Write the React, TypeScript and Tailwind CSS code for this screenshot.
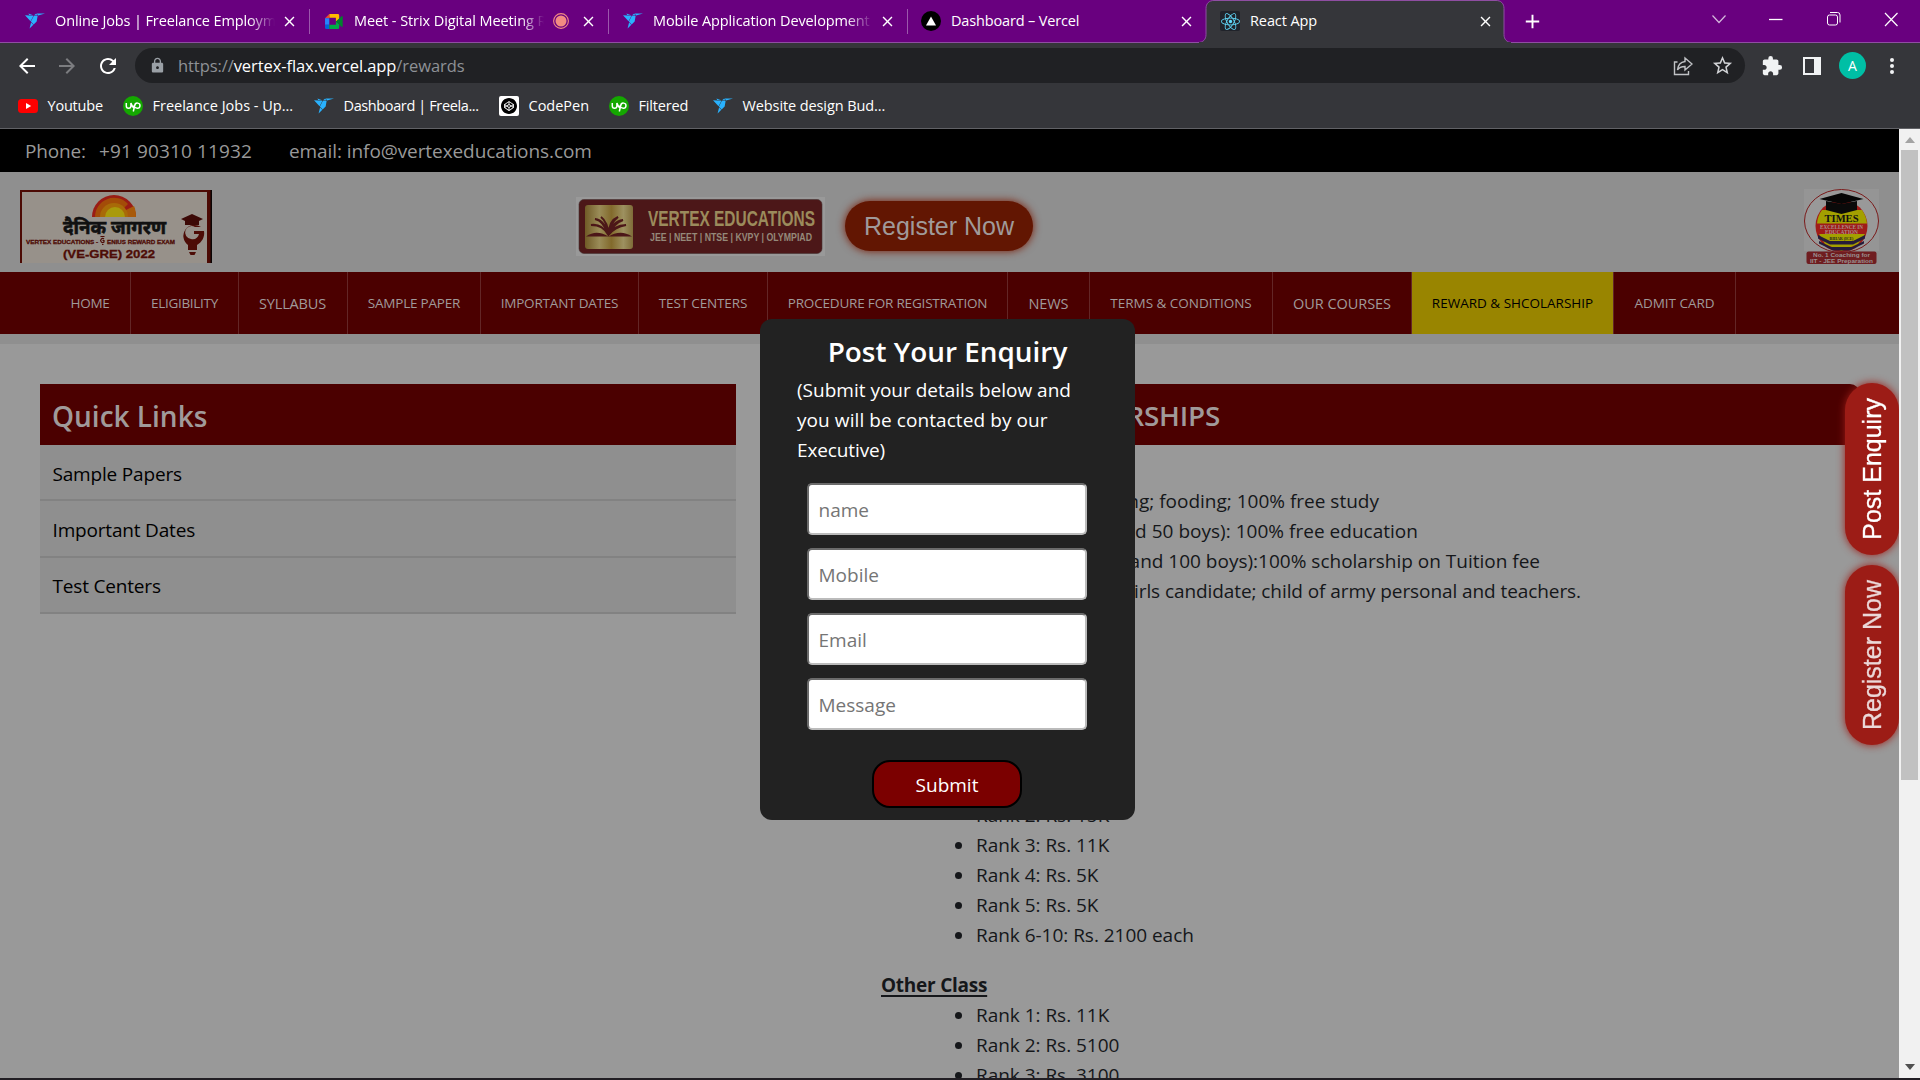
import React from "react";
import { SiFreelancer, SiCodepen } from "react-icons/si";
import { FaReact } from "react-icons/fa";
import { MdArrowBack, MdArrowForward, MdRefresh, MdLock, MdStarBorder, MdExtension, MdClose, MdAdd } from "react-icons/md";

const ui = "font-['Open_Sans','Noto_Sans',sans-serif]";
const arial = "font-['Liberation_Sans',Arial,sans-serif]";

function Bird() {
  return <SiFreelancer className="h-[20px] w-[20px] text-[#29b2fe]" />;
}

function Up() {
  return (
    <svg viewBox="0 0 20 20" className="h-5 w-5">
      <circle cx="10" cy="10" r="10" fill="#14a800" />
      <path
        d="M3.3 7v3a2.3 2.3 0 0 0 4.6 0V7c1 3 2.1 4.6 3.4 5.4M10.3 15.5l1.5-6.2A2.6 2.6 0 1 1 14.2 12.300c-1.500 0-3-1.200-3.900-2.600"
        fill="none"
        stroke="#fff"
        strokeWidth="1.500"
      />
    </svg>
  );
}

function Youtube() {
  return (
    <svg viewBox="0 0 20 20" className="h-5 w-5">
      <rect x="0" y="3" width="20" height="14" rx="3.500" fill="#f00" />
      <path d="M8 7l5.200 3L8 13z" fill="#fff" />
    </svg>
  );
}

function Meet() {
  return (
    <svg viewBox="0 0 20 18" className="h-[17px] w-5">
      <path d="M5 1h9a1.500 1.500 0 0 1 1.500 1.500V7l-3.500 2V5H5z" fill="#ffba00" />
      <path d="M5 1v4.500H.5z" fill="#ea4335" />
      <path d="M.5 5.500H5v7H.5z" fill="#2684fc" />
      <path d="M.5 12.500H5V17H2a1.500 1.500 0 0 1-1.500-1.500z" fill="#0066da" />
      <path d="M5 12.500h7V9l3.500 3v3.500A1.500 1.500 0 0 1 14 17H5z" fill="#00ac47" />
      <path d="M12 9l6-5.500c.6-.5 1.200-.2 1.200.5v10c0 .7-.6 1-1.200.5z" fill="#00832d" />
    </svg>
  );
}

function Vercel() {
  return (
    <svg viewBox="0 0 20 20" className="h-5 w-5">
      <circle cx="10" cy="10" r="10" fill="#000" />
      <path d="M10 5.500l5 9H5z" fill="#fff" />
    </svg>
  );
}

function Tab({ icon, title, recording }: { icon: React.ReactNode; title: string; recording?: boolean }) {
  return (
    <div className="flex h-[42px] w-[299px] shrink-0 items-center pl-[14px]">
      <div className="flex w-[20px] shrink-0 justify-center">{icon}</div>
      <div
        className={
          "ml-[10px] overflow-hidden whitespace-nowrap text-[14.500px] leading-[20px] text-white [mask-image:linear-gradient(to_right,black_88%,transparent)] " +
          (recording ? "w-[190px] tracking-[-0.080px]" : "w-[220px] tracking-[-0.120px]")
        }
      >
        {title}
      </div>
      {recording && (
        <svg viewBox="0 0 16 16" className="ml-[9px] h-4 w-4 shrink-0">
          <circle cx="8" cy="8" r="5.500" fill="#f28b82" />
          <circle cx="8" cy="8" r="7.400" fill="none" stroke="#f28b82" strokeWidth="1.100" />
        </svg>
      )}
      <MdClose className="ml-auto mr-[11px] h-[17px] w-[17px] shrink-0 text-white" />
      <div className="h-[25px] w-px bg-[#9c58ac]" />
    </div>
  );
}

function TabStrip() {
  return (
    <div className="flex h-[43px] border-b border-[#8f4ea2] bg-[#69007f]">
      <div className="flex w-[1206px] pl-[11px]">
        <Tab icon={<Bird />} title="Online Jobs | Freelance Employment" />
        <Tab icon={<Meet />} title="Meet - Strix Digital Meeting Room" recording />
        <Tab icon={<Bird />} title="Mobile Application Development" />
        <div className="flex h-[42px] w-[298px] shrink-0 items-center pl-[13px]">
          <Vercel />
          <div className="ml-[10px] whitespace-nowrap text-[14.500px] tracking-[-0.150px] text-white">Dashboard – Vercel</div>
          <MdClose className="ml-auto mr-[11px] h-[17px] w-[17px] text-white" />
        </div>
      </div>
      <div className="relative h-[43px] w-[298px]">
        <svg viewBox="0 0 314 43" className="absolute -left-[8px] top-0 h-[43px] w-[314px]">
          <path
            d="M0 43v-.5c5 0 8-3 8-8V8.500C8 3.500 11 .5 16 .5H298c5 0 8 3 8 8V34.500c0 5 3 8 8 8V43z"
            fill="#35363a"
            stroke="#8f4ea2"
          />
          <rect y="42" x="1" width="312" height="1" fill="#35363a" />
        </svg>
        <div className="relative flex h-[42px] items-center pl-[14px]">
          <div className="flex h-5 w-5 items-center justify-center rounded-[2px] bg-[#20232a]">
            <FaReact className="h-[19px] w-[19px] text-[#61dafb]" />
          </div>
          <div className="ml-[10px] text-[14.500px] tracking-[-0.100px] text-white">React App</div>
          <MdClose className="ml-auto mr-[10px] h-[17px] w-[17px] text-white" />
        </div>
      </div>
      <div className="flex h-[42px] w-[416px] items-center pl-[17px] text-white">
        <MdAdd className="h-[23px] w-[23px]" />
        <svg viewBox="0 0 190 20" className="mb-[5px] ml-[164px] h-5 w-[190px]" fill="none" stroke="#fff">
          <path d="M4.500 6.500l6.500 7 6.500-7" stroke="#d5b8dc" strokeWidth="1.200" />
          <path d="M61 10.500h13.500" strokeWidth="1.300" />
          <rect x="119.500" y="6" width="10" height="10" rx="2" />
          <path d="M122 3.500h7.500a2.500 2.500 0 0 1 2.500 2.500v7.500" />
          <path d="M177 4l12.500 13M189.500 4l-12.500 13" strokeWidth="1.200" />
        </svg>
      </div>
    </div>
  );
}

function Toolbar() {
  return (
    <div className="flex h-[45px] items-center bg-[#35363a] text-white">
      <div className="flex w-[135px] items-center pl-[15px]">
        <MdArrowBack className="h-6 w-6" />
        <MdArrowForward className="ml-[16px] h-6 w-6 text-[#7c7d80]" />
        <MdRefresh className="ml-[17px] h-6 w-6" />
      </div>
      <div className="flex h-[35px] w-[1610px] items-center rounded-full bg-[#202124] pl-[14px] pr-[11px]">
        <MdLock className="h-[17px] w-[17px] text-[#9aa0a6]" />
        <div className="ml-[12px] pt-px text-[16.500px] leading-[22px] tracking-[-0.080px] text-[#8e9196]">
          https://<span className="text-white">vertex-flax.vercel.app</span>/rewards
        </div>
        <svg viewBox="0 0 20 20" className="ml-auto h-5 w-5" fill="none" stroke="#c0c2c5" strokeWidth="1.400">
          <path d="M4.500 6H1.500v12.500h14V15" />
          <path d="M12 2l7 6-7 6v-3.500c-4 0-6 1-7.500 3.500C5 9 7.500 6 12 5.500z" />
        </svg>
        <MdStarBorder className="ml-[18px] h-[23px] w-[23px] text-[#d0d2d5]" />
      </div>
      <MdExtension className="ml-[16px] h-[22px] w-[22px] text-[#f1f3f4]" />
      <div className="ml-[20px] h-[18px] w-[18px] border-[2.500px] border-r-[7px] border-[#f1f3f4]" />
      <div className="ml-[18px] flex h-[27px] w-[27px] items-center justify-center rounded-full bg-[#00bfa5] text-[14px]">A</div>
      <svg viewBox="0 0 6 20" className="ml-[23px] h-5 w-[6px]" fill="#f1f3f4">
        <circle cx="3" cy="4" r="2" />
        <circle cx="3" cy="10" r="2" />
        <circle cx="3" cy="16" r="2" />
      </svg>
    </div>
  );
}

function Bookmark({ icon, label, className }: { icon: React.ReactNode; label: string; className: string }) {
  return (
    <div className={"flex shrink-0 items-center whitespace-nowrap " + className}>
      <div className="flex w-5 justify-center">{icon}</div>
      <span className="ml-[9.500px] text-[14.500px] text-white">{label}</span>
    </div>
  );
}

function Bookmarks() {
  return (
    <div className="flex h-[41px] items-center border-b border-[#616266] bg-[#35363a] pb-[4px] pl-[18px]">
      <Bookmark className="w-[105px] tracking-[-0.200px]" icon={<Youtube />} label="Youtube" />
      <Bookmark className="w-[191px] tracking-[0px]" icon={<Up />} label="Freelance Jobs - Up..." />
      <Bookmark className="w-[185px] tracking-[-0.380px]" icon={<Bird />} label="Dashboard | Freela..." />
      <Bookmark
        className="w-[110px]"
        icon={
          <div className="flex h-5 w-5 items-center justify-center rounded-[2px] bg-white">
            <SiCodepen className="h-4 w-4 text-black" />
          </div>
        }
        label="CodePen"
      />
      <Bookmark className="w-[104px] tracking-[-0.180px]" icon={<Up />} label="Filtered" />
      <Bookmark className="w-[180px] tracking-[-0.100px]" icon={<Bird />} label="Website design Bud..." />
    </div>
  );
}

function JagranLogo() {
  return (
    <svg viewBox="0 0 192 73" className="h-[73px] w-[192px]">
      <rect width="192" height="73" fill="#4c0a04" />
      <rect x="190.500" width="1.500" height="73" fill="#0a0505" />
      <rect x="2" y="2" width="185" height="71" fill="#97918a" />
      <path d="M72 27a22 22 0 0 1 44 0z" fill="#9a1c14" />
      <path d="M75 27a19 19 0 0 1 33-13l-6 6a12 12 0 0 1 2 7z" fill="#a34c08" />
      <path d="M104 21l10-5c1.500 3 2 7 2 11h-10z" fill="#a85a0a" />
      <path d="M80 27a14 14 0 0 1 28 0z" fill="#a86a08" />
      <path d="M85 27a10 10 0 0 1 20 0z" fill="#a99a0c" />
      <text x="43" y="44" fontSize="19.500" fontWeight="700" fill="#111" stroke="#111" strokeWidth="0.600" textLength="103" lengthAdjust="spacingAndGlyphs">
        दैनिक जागरण
      </text>
      <g fontFamily="Liberation Sans" fontWeight="700" fill="#4d0c06" stroke="#4d0c06" strokeWidth="0.300">
        <text x="6" y="54" fontSize="6" textLength="72" lengthAdjust="spacingAndGlyphs">VERTEX EDUCATIONS -</text>
        <text x="87" y="54" fontSize="6" textLength="68" lengthAdjust="spacingAndGlyphs">ENIUS REWARD EXAM</text>
        <text x="43" y="67.500" fontSize="11" textLength="92" lengthAdjust="spacingAndGlyphs">(VE-GRE) 2022</text>
      </g>
      <path d="M80.500 46.500h4M84 49a2 2 0 1 0 0 3v-1.500h-1.500M82 54.500h1.500" fill="none" stroke="#4d0c06" strokeWidth="1.200" />
      <path d="M172 24l11 5-4 2v4h-14v-4l-4-2z" fill="#3c0906" />
      <path d="M181 37a11 11 0 1 0-13 18v5h9v-5c5-3 8-8 7-14h-10v3h5c-1 4-4 6-8 5a6.500 6.500 0 1 1 4-12z" fill="#4d0c06" />
      <path d="M169 62h7l-1.500 3h-4z" fill="#4d0c06" />
    </svg>
  );
}

function VertexLogo() {
  return (
    <svg viewBox="0 0 249 59" className="h-[59px] w-[249px]">
      <defs>
        <linearGradient id="gold" x1="0" x2="1">
          <stop offset="0" stopColor="#705a26" />
          <stop offset="0.300" stopColor="#9a8c58" />
          <stop offset="0.550" stopColor="#826a2c" />
          <stop offset="0.800" stopColor="#9d9160" />
          <stop offset="1" stopColor="#7f6c38" />
        </linearGradient>
      </defs>
      <rect width="249" height="59" fill="#999" />
      <rect x="3" y="2.500" width="243" height="54" rx="5" fill="#4c1718" stroke="#433" strokeWidth="0.600" />
      <rect x="9" y="8" width="48" height="44" rx="3" fill="url(#gold)" />
      <g transform="translate(0 -3)">
        <path d="M10 42.500c8-6 16-4 22.500 0 6.500-4 15-6 23.500 0H10z" fill="#4c1718" />
        <path
          d="M32.500 41C28 33 22 30 15 31c8 0 14 3 17.500 10C29 31 25 26 19 25c7 1 11 6 13.500 16C31 29 28 25 25 23c4 3 7 9 7.500 18C33 29 37 25 42 23c-4 3-8 9-9.500 18C36 31 40 27 47 26c-6 2-11 7-14.500 15C37 33 43 31 50 31c-7 1-13 4-17.500 10z"
          fill="#4c1718"
          stroke="#4c1718"
          strokeWidth="2"
        />
      </g>
      <g fontFamily="Liberation Sans" fill="#9b8b5c">
        <text x="72" y="29" fontSize="22" fontWeight="700" textLength="167" lengthAdjust="spacingAndGlyphs">VERTEX EDUCATIONS</text>
        <text x="74" y="43.700" fontSize="10.800" fontWeight="700" fill="#95897a" textLength="162" lengthAdjust="spacingAndGlyphs">JEE | NEET | NTSE | KVPY | OLYMPIAD</text>
      </g>
    </svg>
  );
}

function TimesLogo() {
  return (
    <svg viewBox="0 0 75 75" className="h-[75px] w-[75px]">
      <rect width="75" height="62" fill="#959595" />
      <ellipse cx="37.500" cy="32" rx="37" ry="31.500" fill="#999" stroke="#7a1a1a" />
      <circle cx="37.500" cy="37" r="26" fill="#a01c18" />
      <path d="M18 21h40c3 4 4.500 9 5 13.500H13C13.500 29 15 25 18 21z" fill="#a3a000" />
      <path d="M15 45h46l-7 10-16.500 7L21 55z" fill="#a3a000" />
      <path d="M14 46l12 6h23l12-6v3.500l-12 6H26l-12-6zM15 52l12 6h21l12-6v2.500l-14 7H29l-14-7z" fill="#251c3a" />
      <path d="M37.500 4l22 6-22 5-22-5z" fill="#060606" />
      <path d="M22 12l15.500 3L53 12v9l-15.500 4L22 21z" fill="#0a0a0a" />
      <text x="37.500" y="33" textAnchor="middle" fontFamily="Liberation Serif" fontSize="10" fontWeight="700" fill="#111" textLength="34" lengthAdjust="spacingAndGlyphs">TIMES</text>
      <g fontFamily="Liberation Serif" fontSize="5.500" fontWeight="700" fill="#aa8f8c" textAnchor="middle">
        <text x="37.500" y="39.500" textLength="43" lengthAdjust="spacingAndGlyphs">EXCELLENCE IN</text>
        <text x="37.500" y="44.700" textLength="33" lengthAdjust="spacingAndGlyphs">EDUCATION</text>
        <text x="37.500" y="50.500" fontSize="4" fill="#222">BIHAR (ICE)</text>
      </g>
      <rect x="2.500" y="62.500" width="70" height="12.500" rx="2" fill="#6f1d20" />
      <g fontFamily="Liberation Sans" fontSize="5.600" fontWeight="700" fill="#9a9090" textAnchor="middle">
        <text x="37.500" y="68.300" textLength="57" lengthAdjust="spacingAndGlyphs">No. 1 Coaching for</text>
        <text x="37.500" y="73.800" textLength="63" lengthAdjust="spacingAndGlyphs">IIT - JEE Preparation</text>
      </g>
    </svg>
  );
}

const nav = [
  { label: "HOME", cls: "w-[81px] text-[13.500px] tracking-[-0.300px]" },
  { label: "ELIGIBILITY", cls: "w-[108px] text-[13.500px] tracking-[-0.300px]" },
  { label: "SYLLABUS", cls: "w-[109px] text-[14.500px] pr-px pt-px tracking-[-0.150px]" },
  { label: "SAMPLE PAPER", cls: "w-[133px] text-[13.500px] tracking-[-0.200px]" },
  { label: "IMPORTANT DATES", cls: "w-[158px] text-[13.500px] tracking-[-0.200px]" },
  { label: "TEST CENTERS", cls: "w-[129px] text-[13.500px] tracking-[-0.150px]" },
  { label: "PROCEDURE FOR REGISTRATION", cls: "w-[240px] text-[13.500px] tracking-[-0.180px]" },
  { label: "NEWS", cls: "w-[82px] text-[14.500px] pt-px tracking-[-0.100px]" },
  { label: "TERMS & CONDITIONS", cls: "w-[183px] text-[13.500px] tracking-[-0.020px]" },
  { label: "OUR COURSES", cls: "w-[139px] text-[14.500px] pt-px tracking-[-0.050px]" },
  { label: "REWARD & SHCOLARSHIP", cls: "w-[202px] text-[13.500px] tracking-[0px] bg-[#998500] text-black" },
  { label: "ADMIT CARD", cls: "w-[122px] text-[13.500px] tracking-[-0.020px]" },
];

function Rank({ children }: { children: React.ReactNode }) {
  return (
    <li className="flex h-[30px] items-center whitespace-nowrap pl-[75px] tracking-[-0.030px]">
      <span className="mr-[14px] h-[7px] w-[7px] rounded-full bg-[#15171a]" />
      {children}
    </li>
  );
}

function SiteContent() {
  return (
    <div className="flex h-[736px] items-start overflow-hidden bg-[#999] pl-[40px] pt-[40px]">
      <section className="w-[696px]">
        <h2 className="flex h-[61px] items-center bg-[#4b0000] pb-px pl-[12px] pt-[4px] text-[28px] font-semibold text-[#a09a9a]">Quick Links</h2>
        {["Sample Papers", "Important Dates", "Test Centers"].map((t) => (
          <div key={t} className="flex h-[56.300px] items-center border-b-2 border-[#828282] bg-[#8f8f8f] pl-[12.500px] pt-[4px] text-[19px] tracking-[-0.180px] text-black">
            {t}
          </div>
        ))}
      </section>
      <section className="ml-[40px] w-[1084px] text-[19px] text-[#15171a]">
        <h2 className="flex h-[61px] items-center rounded-t-[10px] bg-[#4b0000] pl-[65px] pt-[3px]">
          <span className="w-[379px] whitespace-nowrap text-right text-[27.800px] font-semibold tracking-[-0.200px] text-[#a09a9a]">REWARDS & SCHOLARSHIPS</span>
        </h2>
        <ul className="mt-[41px] whitespace-nowrap text-right leading-[30px]">
          <li className="w-[603px]">Free lodging; fooding; 100% free study</li>
          <li className="w-[642px] tracking-[0.020px]">(50 girls and 50 boys): 100% free education</li>
          <li className="w-[764px]">(100 girls and 100 boys):100% scholarship on Tuition fee</li>
          <li className="w-[805px] tracking-[-0.080px]">Special discount for girls candidate; child of army personal and teachers.</li>
        </ul>
        <ul className="mt-[194px] pl-[104px]">
          <Rank>Rank 2: Rs. 15K</Rank>
          <Rank>Rank 3: Rs. 11K</Rank>
          <Rank>Rank 4: Rs. 5K</Rank>
          <Rank>Rank 5: Rs. 5K</Rank>
          <Rank>Rank 6-10: Rs. 2100 each</Rank>
        </ul>
        <h3 className="mt-[20px] h-[30px] pl-[105px] font-bold leading-[30px] tracking-[-0.250px] underline decoration-2 underline-offset-[3px]">Other Class</h3>
        <ul className="pl-[104px]">
          <Rank>Rank 1: Rs. 11K</Rank>
          <Rank>Rank 2: Rs. 5100</Rank>
          <Rank>Rank 3: Rs. 3100</Rank>
        </ul>
      </section>
    </div>
  );
}

function EnquiryModal() {
  return (
    <div className="absolute left-[760px] top-[190px] flex h-[501px] w-[375px] flex-col items-center rounded-[12px] bg-[#222] text-white">
      <h2 className="mt-[13px] whitespace-nowrap text-[27.900px] font-semibold leading-[38px]">Post Your Enquiry</h2>
      <div className="mt-[5px] w-[301px] whitespace-nowrap text-[19px] leading-[30px]">
        <p>(Submit your details below and</p>
        <p className="tracking-[0.080px]">you will be contacted by our</p>
        <p className="tracking-[-0.120px]">Executive)</p>
      </div>
      <form className="mt-[18px] flex flex-col items-center gap-[13px] pr-px">
        {["name", "Mobile", "Email", "Message"].map((p) => (
          <input
            key={p}
            placeholder={p}
            className="h-[52px] w-[280px] rounded-[5px] border-2 border-b-[#bbb] border-l-[#6b6b6b] border-r-[#bbb] border-t-[#6b6b6b] bg-white px-[9.500px] pt-[2px] text-[19px] placeholder:text-[#757575]"
          />
        ))}
        <button type="button" className="mt-[17px] h-[48px] w-[150px] rounded-[18px] border-2 border-black bg-[#7b0000] pt-[2px] text-[19px] text-white">
          Submit
        </button>
      </form>
    </div>
  );
}

function Website() {
  return (
    <div className="relative h-[949px] w-[1899px] shrink-0 overflow-hidden">
      <div className="flex h-[43px] items-center bg-black pb-px pl-[25px] pt-[2px] text-[19px] text-[#999]">
        <span className="w-[74px] tracking-[-0.150px]">Phone:</span>
        <span className="w-[190px] tracking-[0.120px]">+91 90310 11932</span>
        <span className="tracking-[-0.080px]">email: info@vertexeducations.com</span>
      </div>
      <div className="flex h-[100px] items-start bg-[#8f8f8f] pl-[20px] pt-[17px]">
        <div className="mt-px w-[556px]">
          <JagranLogo />
        </div>
        <div className="mt-[8px] w-[269px]">
          <VertexLogo />
        </div>
        <div className={"mt-[12px] flex h-[50px] w-[188px] items-center justify-center rounded-full bg-[#621602] pt-[2px] text-[25px] text-[#a09a9a] shadow-[0_0_8px_#7a1a05] " + arial}>Register Now</div>
        <div className="ml-[771px]">
          <TimesLogo />
        </div>
      </div>
      <nav className="flex h-[62px] bg-[#4b0000] pl-[50px] text-[#a09a9a]">
        {nav.map((n) => (
          <div key={n.label} className={"flex shrink-0 items-center justify-center whitespace-nowrap border-r border-[#632626] " + n.cls}>
            {n.label}
          </div>
        ))}
      </nav>
      <div className="h-[10px] bg-[#8f8f8f]" />
      <SiteContent />
      <div className={"absolute right-0 top-[254px] flex w-[54px] flex-col gap-[10px] text-[25px] text-white " + arial}>
        <div className="flex h-[172px] items-center justify-center rounded-[27px] bg-[#9c1c16] pl-[2px] shadow-[0_0_8px_#9c1c16]">
          <span className="rotate-180 whitespace-nowrap [-webkit-text-stroke:0.300px_white] [writing-mode:vertical-rl]">Post Enquiry</span>
        </div>
        <div className="flex h-[180px] items-center justify-center rounded-[27px] bg-[#9c1c16] pl-[2px] text-[#ebd8d8] shadow-[0_0_8px_#9c1c16]">
          <span className="rotate-180 whitespace-nowrap [-webkit-text-stroke:0.300px_#ebd8d8] [writing-mode:vertical-rl]">Register Now</span>
        </div>
      </div>
      <EnquiryModal />
    </div>
  );
}

export default function App() {
  return (
    <div className={"h-[1080px] w-[1920px] overflow-hidden bg-[#221f24] " + ui}>
      <TabStrip />
      <Toolbar />
      <Bookmarks />
      <div className="flex h-[949px] overflow-hidden">
        <Website />
        <div className="flex h-[949px] w-[21px] flex-col items-center bg-[#f1f1f1]">
          <svg viewBox="0 0 10 6" className="mt-[8px] h-[6px] w-[10px]">
            <path d="M5 0l5 6H0z" fill="#a3a3a3" />
          </svg>
          <div className="mt-[7px] h-[630px] w-[17px] bg-[#c1c1c1]" />
          <svg viewBox="0 0 10 6" className="mb-[8px] mt-auto h-[6px] w-[10px]">
            <path d="M0 0h10L5 6z" fill="#505050" />
          </svg>
        </div>
      </div>
    </div>
  );
}
